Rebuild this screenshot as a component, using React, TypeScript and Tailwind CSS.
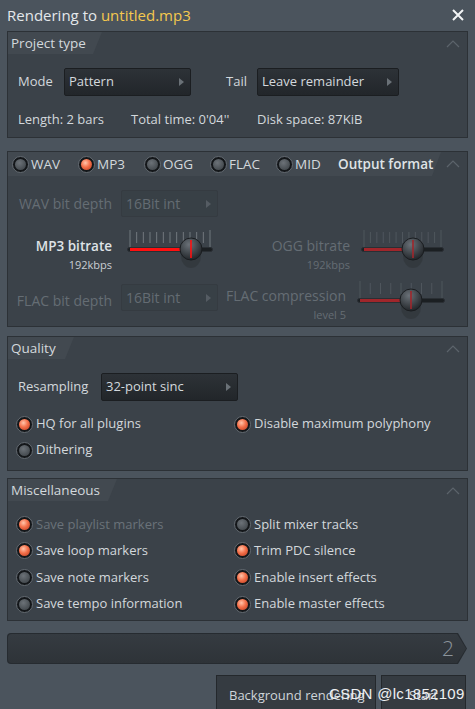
import React from 'react';

const font = "font-['Open_Sans','Noto_Sans',sans-serif]";

const Radio = ({ on }: { on?: boolean }) => (
  <span className="relative inline-block w-[17px] h-[17px] shrink-0 rounded-full border border-[#646b72] bg-[#14171a]">
    <span
      className={
        on
          ? 'absolute inset-[2px] rounded-full bg-[radial-gradient(circle_at_40%_35%,#ffc4aa_0%,#f4704a_45%,#b3371c_100%)]'
          : 'absolute inset-[2px] rounded-full bg-[radial-gradient(circle_at_40%_35%,#6c7278_0%,#4c5257_60%,#383d42_100%)]'
      }
    />
  </span>
);

const Chevron = () => (
  <svg width="14" height="8" viewBox="0 0 14 8" className="absolute right-[7px] top-[8px]">
    <polyline points="1,7 7,1 13,7" fill="none" stroke="#5c646b" strokeWidth="1.2" />
  </svg>
);

const Dropdown = ({ label, w, disabled }: { label: string; w: number; disabled?: boolean }) => (
  <div
    style={{ width: w }}
    className={
      disabled
        ? 'relative h-full flex items-center pl-[4px] rounded-[2px] border border-[#353b41] bg-[#384046] text-[#646c73] text-[14px]'
        : 'relative h-full flex items-center pl-[4px] rounded-[2px] border border-[#1b1e21] bg-[linear-gradient(#2d3237,#22262a)] text-[#d4d9dd]'
    }
  >
    {label}
    <svg width="5" height="8" viewBox="0 0 5 8" className="absolute right-[6px] top-1/2 -translate-y-1/2">
      <polygon points="0,0 5,4 0,8" fill={disabled ? '#555c63' : '#6a7177'} />
    </svg>
  </div>
);

const Slider = ({ w, ticks, knob, red, disabled }: { w: number; ticks: number; knob: number; red: string; disabled?: boolean }) => {
  const xs = Array.from({ length: ticks }, (_, i) => 3 + (i * (w - 6)) / (ticks - 1));
  return (
    <svg width={w} height="44" viewBox={`0 0 ${w} 44`}>
      <defs>
        <radialGradient id={`k${w}${knob}`} cx="40%" cy="30%" r="70%">
          <stop offset="0%" stopColor="#6a7178" />
          <stop offset="100%" stopColor="#22262a" />
        </radialGradient>
      </defs>
      {xs.map((x, i) => (
        <line key={i} x1={x} x2={x} y1={i === 0 || i === ticks - 1 ? 3 : 5} y2={i === 0 || i === ticks - 1 ? 20 : 16} stroke={disabled ? '#4f565d' : '#71787e'} strokeWidth="1" />
      ))}
      <rect x="0.5" y="20.5" width={w - 1} height="4" rx="2" fill="#1b1f22" stroke="#2a2f34" />
      <rect x="3" y="21" width={knob - 8} height="3" fill={red} />
      <ellipse cx={knob} cy="29" rx="10" ry="12" fill="#30363b" opacity="0.7" />
      <circle cx={knob} cy="22" r="11" fill={`url(#k${w}${knob})`} stroke="#1a1d20" />
      <line x1={knob} x2={knob} y1="13" y2="31" stroke={red} strokeWidth="1.6" />
    </svg>
  );
};

const Panel = ({ title, tabW, h, headH = 22, children, tab }: { title?: string; tabW: number; h: number; headH?: number; children: React.ReactNode; tab?: React.ReactNode }) => (
  <div style={{ height: h }} className="mx-[7px] border border-[#2c3136] bg-[#3b4249] shrink-0">
    <div style={{ height: headH }} className="relative">
      <div
        style={{ width: tabW, height: headH }}
        className="flex items-center pl-[3px] bg-[#424950] [clip-path:polygon(0_0,100%_0,calc(100%_-_9px)_100%,0_100%)] text-[#d3d8dc] text-[13.5px]"
      >
        {tab ?? title}
      </div>
      <Chevron />
    </div>
    {children}
  </div>
);

const Opt = ({ on, label, dim }: { on?: boolean; label: string; dim?: boolean }) => (
  <div className="flex items-center gap-[3px]">
    <Radio on={on} />
    <span className={dim ? 'text-[#6a7279]' : 'text-[#d3d8dc]'}>{label}</span>
  </div>
);

export default function App() {
  return (
    <div className={`${font} relative w-[475px] h-[709px] overflow-hidden bg-[#4b545d] text-[13px] text-[#d3d8dc] flex flex-col`}>
      {/* title */}
      <div className="h-[31px] flex items-center pl-[7px] relative shrink-0">
        <span className="text-[15px] text-[#e4e8eb]">
          Rendering to <span className="text-[#f5c84e]">untitled.mp3</span>
        </span>
        <svg width="12" height="12" viewBox="0 0 12 12" className="absolute left-[452px] top-[9px]">
          <path d="M1 1L11 11M11 1L1 11" stroke="#f2f4f5" strokeWidth="2" />
        </svg>
      </div>

      <Panel title="Project type" tabW={94} h={107}>
        <div className="flex items-center h-[28px] mt-[14px]">
          <span className="ml-[10px] w-[46px]">Mode</span>
          <Dropdown label="Pattern" w={127} />
          <span className="ml-[35px] w-[31px]">Tail</span>
          <Dropdown label="Leave remainder" w={142} />
        </div>
        <div className="flex items-center h-[16px] mt-[16px]">
          <span className="ml-[10px] w-[113px]">Length: 2 bars</span>
          <span className="w-[126px]">Total time: 0'04''</span>
          <span>Disk space: 87KiB</span>
        </div>
      </Panel>

      <div className="mt-[13px]" />
      <Panel
        tabW={433}
        h={176}
        headH={24}
        tab={
          <div className="flex items-center w-full">
            <div className="flex items-center pl-[1px]">
              {['WAV', 'MP3', 'OGG', 'FLAC', 'MID'].map((f) => (
                <div key={f} className="w-[66px] flex items-center gap-[2px]">
                  <Radio on={f === 'MP3'} />
                  <span className="text-[#d3d8dc]">{f}</span>
                </div>
              ))}
            </div>
            <span className="ml-[-4px] font-semibold text-[#dfe3e6]">Output format</span>
          </div>
        }
      >
        {/* row 1 */}
        <div className="flex items-center h-[27px] mt-[14px]">
          <span className="w-[104px] text-right text-[14px] text-[#656d74]">WAV bit depth</span>
          <div className="ml-[9px] h-full">
            <Dropdown label="16Bit int" w={97} disabled />
          </div>
        </div>
        {/* row 2 */}
        <div className="flex h-[44px] mt-[10px]">
          <div className="w-[104px] flex flex-col items-end pt-[10px]">
            <span className="font-semibold text-[13.5px] leading-[18px] text-[#dfe3e6]">MP3 bitrate</span>
            <span className="text-[11px] leading-[14px] mt-[3px] text-[#c9ced3]">192kbps</span>
          </div>
          <div className="ml-[15px]">
            <Slider w={86} ticks={13} knob={64} red="#ff1010" />
          </div>
          <div className="w-[137px] flex flex-col items-end pt-[10px]">
            <span className="text-[14px] leading-[18px] text-[#656d74]">OGG bitrate</span>
            <span className="text-[11px] leading-[14px] mt-[3px] text-[#656d74]">192kbps</span>
          </div>
          <div className="ml-[11px]">
            <Slider w={83} ticks={13} knob={52} red="#a0262b" disabled />
          </div>
        </div>
        {/* row 3 */}
        <div className="flex h-[44px] mt-[7px]">
          <div className="w-[104px] flex items-center justify-end text-[14px] text-[#656d74]">FLAC bit depth</div>
          <div className="ml-[9px] h-[27px] mt-[6px]">
            <Dropdown label="16Bit int" w={97} disabled />
          </div>
          <div className="w-[128px] flex flex-col items-end pt-[9px]">
            <span className="text-[14px] leading-[18px] text-[#656d74]">FLAC compression</span>
            <span className="text-[11px] leading-[14px] mt-[3px] text-[#656d74]">level 5</span>
          </div>
          <div className="ml-[11px]">
            <Slider w={88} ticks={9} knob={54} red="#a0262b" disabled />
          </div>
        </div>
      </Panel>

      <div className="mt-[9px]" />
      <Panel title="Quality" tabW={66} h={135}>
        <div className="flex items-center h-[28px] mt-[14px]">
          <span className="ml-[10px] w-[83px]">Resampling</span>
          <Dropdown label="32-point sinc" w={137} />
        </div>
        <div className="grid grid-cols-[218px_1fr] pl-[8px] mt-[10px]">
          <div className="h-[26px] flex items-center"><Opt on label="HQ for all plugins" /></div>
          <div className="h-[26px] flex items-center"><Opt on label="Disable maximum polyphony" /></div>
          <div className="h-[26px] flex items-center"><Opt label="Dithering" /></div>
        </div>
      </Panel>

      <div className="mt-[7px]" />
      <Panel title="Miscellaneous" tabW={109} h={143}>
        <div className="grid grid-cols-[218px_1fr] auto-rows-[26.6px] pl-[8px] mt-[10px]">
          <div className="flex items-center"><Opt on dim label="Save playlist markers" /></div>
          <div className="flex items-center"><Opt label="Split mixer tracks" /></div>
          <div className="flex items-center"><Opt on label="Save loop markers" /></div>
          <div className="flex items-center"><Opt on label="Trim PDC silence" /></div>
          <div className="flex items-center"><Opt label="Save note markers" /></div>
          <div className="flex items-center"><Opt on label="Enable insert effects" /></div>
          <div className="flex items-center"><Opt label="Save tempo information" /></div>
          <div className="flex items-center"><Opt on label="Enable master effects" /></div>
        </div>
      </Panel>

      {/* progress */}
      <div className="mt-[12px] ml-[7px] w-[460px] h-[31px] shrink-0 bg-[#262b30] [clip-path:polygon(0_0,calc(100%_-_9px)_0,100%_50%,calc(100%_-_9px)_100%,0_100%)] rounded-l-[4px]">
        <div className="m-[1px] h-[29px] bg-[linear-gradient(#353b41,#2e3338)] rounded-l-[4px] [clip-path:polygon(0_0,calc(100%_-_9px)_0,100%_50%,calc(100%_-_9px)_100%,0_100%)] flex items-center justify-end pr-[12px]">
          <span className="text-[21px] font-light text-[#8c949b] leading-none">2</span>
        </div>
      </div>

      {/* buttons */}
      <div className="flex mt-[11px] ml-[216px] gap-[5px] shrink-0">
        <div className="w-[160px] h-[42px] border border-[#24282c] bg-[#353b41] flex items-center pl-[12px] text-[#cfd4d9]">
          Background rendering
        </div>
        <div className="w-[85px] h-[42px] border border-[#24282c] bg-[#353b41] flex items-center justify-center text-[#cfd4d9]">
          Start
        </div>
      </div>

      {/* watermark overlay */}
      <span className="absolute left-[329px] top-[683px] text-[15px] text-[#eef0f2] font-['Liberation_Sans',sans-serif] tracking-[0.3px]">
        CSDN @lc1852109
      </span>
    </div>
  );
}
